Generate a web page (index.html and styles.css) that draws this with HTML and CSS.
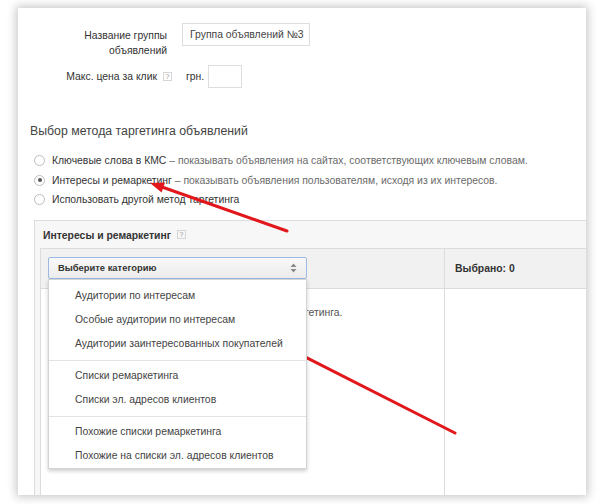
FILE: index.html
```html
<!DOCTYPE html>
<html lang="ru">
<head>
<meta charset="utf-8">
<title>Таргетинг</title>
<link rel="stylesheet" href="styles.css">
</head>
<body>
<div class="card">
  <div class="form">
    <div class="row row-name">
      <div class="label label-name">Название группы<br>объявлений</div>
      <div class="input input-name">Группа объявлений №3</div>
    </div>
    <div class="row row-price">
      <div class="label label-price">Макс. цена за клик</div>
      <span class="help">?</span>
      <span class="unit">грн.</span>
      <div class="input input-price"></div>
    </div>
  </div>

  <h2 class="section-title">Выбор метода таргетинга объявлений</h2>

  <ul class="radios">
    <li><span class="radio"></span><span class="opt">Ключевые слова в КМС</span><span class="desc"> – показывать объявления на сайтах, соответствующих ключевым словам.</span></li>
    <li><span class="radio checked"></span><span class="opt">Интересы и ремаркетинг</span><span class="desc"> – показывать объявления пользователям, исходя из их интересов.</span></li>
    <li><span class="radio"></span><span class="opt">Использовать другой метод таргетинга</span></li>
  </ul>

  <div class="panel">
    <div class="panel-head">Интересы и ремаркетинг <span class="help">?</span></div>
    <div class="table">
      <div class="thead">
        <div class="cell cell-left">
          <div class="select">
            <span>Выберите категорию</span>
            <svg class="select-arrows" width="7" height="10" viewBox="0 0 7 10"><polygon points="3.5,0.5 6.5,4 0.5,4" fill="#8a8a8a"/><polygon points="0.5,6 6.5,6 3.5,9.5" fill="#8a8a8a"/></svg>
          </div>
          <div class="menu">
            <div class="item">Аудитории по интересам</div>
            <div class="item">Особые аудитории по интересам</div>
            <div class="item">Аудитории заинтересованных покупателей</div>
            <div class="sep"></div>
            <div class="item">Списки ремаркетинга</div>
            <div class="item">Списки эл. адресов клиентов</div>
            <div class="sep"></div>
            <div class="item">Похожие списки ремаркетинга</div>
            <div class="item">Похожие на списки эл. адресов клиентов</div>
          </div>
        </div>
        <div class="cell cell-right">Выбрано: 0</div>
      </div>
      <div class="tbody">
        <div class="cell cell-left"><p class="hint">Выберите категорию, чтобы увидеть варианты таргетинга.</p></div>
        <div class="cell cell-right"></div>
      </div>
    </div>
  </div>
</div>

<svg class="arrows" width="605" height="504" viewBox="0 0 605 504">
  <line x1="287" y1="231" x2="162" y2="187" stroke="#e2171c" stroke-width="3" stroke-linecap="round"/>
  <polygon points="150,183 165,182.6 161.6,192.4" fill="#e2171c"/>
  <line x1="455" y1="433" x2="253" y2="330.5" stroke="#e2171c" stroke-width="3" stroke-linecap="round"/>
  <polygon points="242,325 256.8,326.6 252.2,335.8" fill="#e2171c"/>
</svg>
</body>
</html>
```

FILE: styles.css
```css
* { box-sizing: border-box; }

html, body {
  margin: 0;
  padding: 0;
  background: #ffffff;
}

body {
  width: 605px;
  height: 504px;
  overflow: hidden;
  font-family: "Liberation Sans", Arial, sans-serif;
  font-size: 10.4px;
  color: #333;
  position: relative;
}

.card {
  margin: 8px 0 0 18px;
  width: 568px;
  height: 487px;
  background: #fff;
  box-shadow: 0 0 9px 2px rgba(0, 0, 0, 0.22);
  overflow: hidden;
  padding-top: 15px;
}

/* top form */
.form {
  display: flex;
  flex-direction: column;
  gap: 7px;
}

.row {
  display: flex;
  align-items: flex-start;
}

.label {
  text-align: right;
  color: #333;
  line-height: 15px;
}

.label-name {
  width: 149px;
  padding-top: 5px;
}

.input {
  border: 1px solid #dedede;
  background: #fff;
}

.input-name {
  margin-left: 15px;
  width: 128px;
  height: 23px;
  line-height: 21px;
  padding-left: 7px;
  color: #444;
  white-space: nowrap;
}

.row-price {
  align-items: center;
}

.label-price {
  width: 139px;
}

.row-price .help {
  margin-left: 6px;
}

.unit {
  margin-left: 14px;
  color: #333;
}

.input-price {
  margin-left: 4px;
  width: 34px;
  height: 23px;
}

.help {
  display: inline-block;
  width: 9px;
  height: 9px;
  border: 1px solid #d6d6d6;
  font-size: 7px;
  line-height: 7px;
  text-align: center;
  color: #999;
  font-weight: normal;
  vertical-align: middle;
}

/* section title */
.section-title {
  margin: 35px 0 0 12px;
  font-size: 12.3px;
  font-weight: normal;
  line-height: 16px;
  color: #444;
}

/* radios */
.radios {
  list-style: none;
  margin: 12px 0 0 16px;
  padding: 0;
}

.radios li {
  display: flex;
  align-items: center;
  height: 19.5px;
}

.radio {
  width: 11px;
  height: 11px;
  border: 1px solid #bdbdbd;
  border-radius: 50%;
  background: #fff;
  margin-right: 7px;
  position: relative;
  flex: none;
}

.radio.checked::after {
  content: "";
  position: absolute;
  left: 2.5px;
  top: 2.5px;
  width: 4px;
  height: 4px;
  border-radius: 50%;
  background: #555;
}

.opt { color: #333; white-space: pre; }
.desc { color: #6a6a6a; white-space: pre; }

/* panel */
.panel {
  margin: 10px 0 0 16px;
  width: 600px;
  height: 300px;
  border: 1px solid #dcdcdc;
  border-right: none;
  background: #f7f7f7;
  display: flex;
  flex-direction: column;
}

.panel-head {
  height: 27px;
  padding: 9px 0 0 8px;
  font-weight: bold;
  color: #333;
  line-height: 12px;
}

.panel-head .help {
  margin-left: 3px;
  margin-top: -2px;
}

.table {
  margin-left: 5px;
  border-top: 1px solid #dcdcdc;
  border-left: 1px solid #dcdcdc;
  flex: 1;
  display: flex;
  flex-direction: column;
  background: #fff;
}

.thead {
  display: flex;
  height: 40px;
  background: #f1f1f1;
  border-bottom: 1px solid #dcdcdc;
}

.tbody {
  display: flex;
  flex: 1;
}

.cell-left {
  width: 404px;
  border-right: 1px solid #dcdcdc;
  position: relative;
}

.cell-right {
  flex: 1;
}

.thead .cell-left {
  padding: 8px 0 0 7px;
}

.thead .cell-right {
  padding-left: 10px;
  line-height: 39px;
  font-weight: bold;
  color: #333;
}

.select {
  width: 259px;
  height: 22px;
  border: 1px solid #9cb9e6;
  border-radius: 2px;
  background: linear-gradient(#f8f8f8, #ececec);
  display: flex;
  align-items: center;
  justify-content: space-between;
  padding: 0 9px 0 9px;
  font-size: 9.4px;
  font-weight: bold;
  color: #333;
}

.select-arrows {
  display: block;
}

.menu {
  position: absolute;
  left: 7px;
  top: 30px;
  width: 259px;
  background: #fff;
  border: 1px solid #d4d4d4;
  box-shadow: 0 2px 4px rgba(0, 0, 0, 0.2);
  padding-top: 4px;
  z-index: 2;
}

.item {
  height: 24px;
  line-height: 24px;
  padding-left: 26px;
  color: #444;
  white-space: nowrap;
}

.sep {
  height: 1px;
  background: #e3e3e3;
  margin: 4px 0 3px;
}

.hint {
  margin: 18px 0 0 19px;
  color: #555;
  white-space: nowrap;
}

/* arrows overlay */
.arrows {
  position: absolute;
  left: 0;
  top: 0;
  pointer-events: none;
}
```
